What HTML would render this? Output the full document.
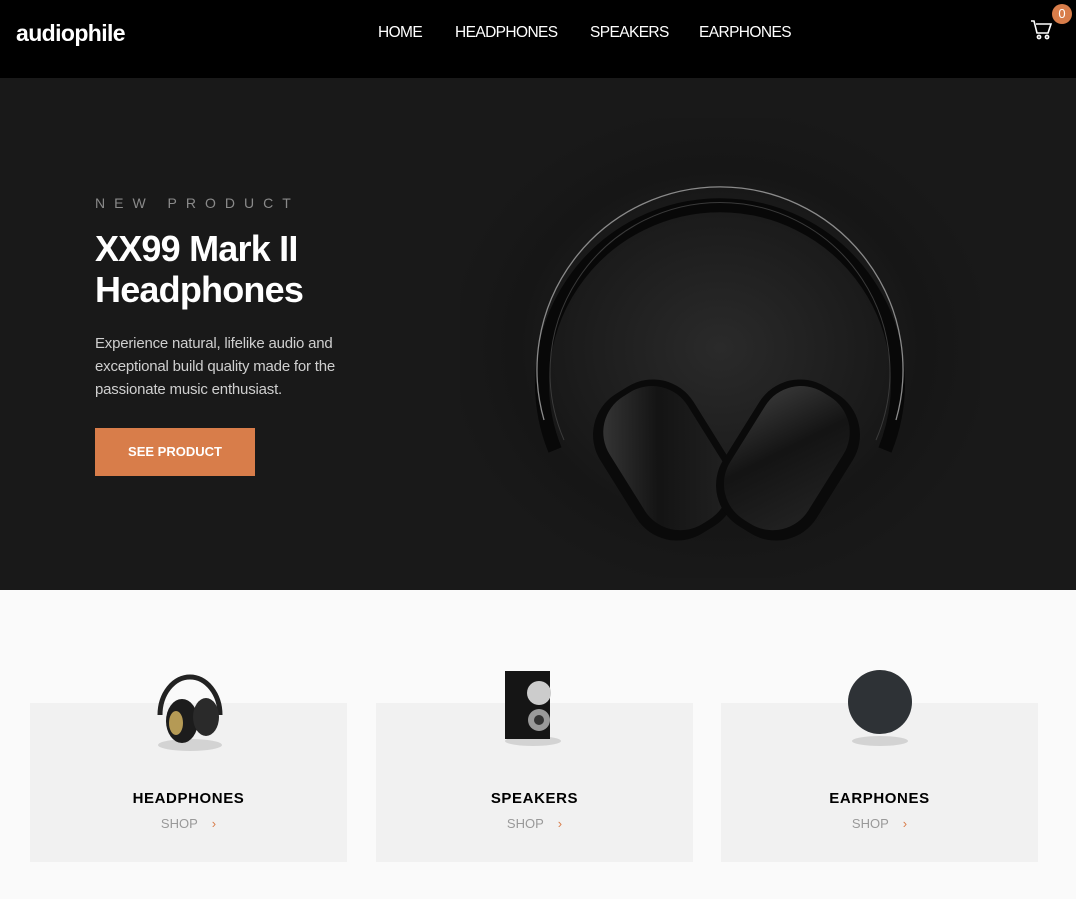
<!DOCTYPE html>
<html><head><meta charset="utf-8"><style>
*{margin:0;padding:0;box-sizing:border-box}
body{width:1076px;height:899px;overflow:hidden;background:#fafafa;font-family:"Liberation Sans",sans-serif}
.hdr{position:absolute;top:0;left:0;width:1076px;height:78px;background:#000}
.logo{position:absolute;left:16px;top:20px;color:#fff;font-weight:bold;font-size:23px;letter-spacing:-0.6px}
.nav{position:absolute;top:24px;color:#fff;font-size:15.5px;letter-spacing:-0.6px}
.hero{position:absolute;top:78px;left:0;width:1076px;height:512px;background:#191919;overflow:hidden}
.np{position:absolute;left:95px;top:117px;color:#8a8a8a;font-size:14px;letter-spacing:9px}
h1{position:absolute;left:95px;top:150px;color:#fff;font-size:36px;line-height:41px;font-weight:bold;letter-spacing:-0.8px}
.desc{position:absolute;left:95px;top:254px;color:#cfcfcf;font-size:15px;line-height:23px;width:280px;letter-spacing:-0.2px}
.btn{position:absolute;left:95px;top:350px;width:160px;height:48px;background:#d87d4a;color:#fff;font-weight:bold;font-size:13px;text-align:center;line-height:48px}
.card{position:absolute;top:703px;width:317px;height:159px;background:#f1f1f1;text-align:center}
.card .t{position:absolute;top:87px;width:100%;font-weight:bold;font-size:15px;letter-spacing:0.6px;color:#000}
.card .s{position:absolute;top:113px;width:100%;font-size:13px;color:#999}
.card .s b{color:#d87d4a;font-weight:normal;margin-left:14px}
.img{position:absolute}
</style></head><body>
<div class="hdr">
<div class="logo">audiophile</div>
<div class="nav" style="left:378px">HOME</div>
<div class="nav" style="left:455px">HEADPHONES</div>
<div class="nav" style="left:590px">SPEAKERS</div>
<div class="nav" style="left:699px">EARPHONES</div>
<svg style="position:absolute;left:1030px;top:19px" width="24" height="22" viewBox="0 0 24 22" fill="none" stroke="#fff" stroke-width="1.6"><path d="M1 2h3l3 12h11l3-9H6"/><circle cx="9" cy="18" r="1.6"/><circle cx="17" cy="18" r="1.6"/></svg>
<div style="position:absolute;left:1052px;top:4px;width:20px;height:20px;border-radius:50%;background:#d87d4a;color:#fff;font-size:13px;text-align:center;line-height:20px">0</div>
</div>
<div class="hero">
<div style="position:absolute;left:460px;top:40px;width:520px;height:460px;background:radial-gradient(ellipse at 50% 50%,#2a2a2a 0%,#161616 55%,#191919 75%)"></div>
<svg style="position:absolute;left:460px;top:42px" width="520" height="460" viewBox="0 0 520 460">
<defs><linearGradient id="g" x1="0" y1="0" x2="1" y2="1"><stop offset="0" stop-color="#4a4a4a"/><stop offset=".45" stop-color="#161616"/><stop offset="1" stop-color="#2a2a2a"/></linearGradient></defs>
<path d="M95 330 A178 178 0 1 1 425 330" fill="none" stroke="#080808" stroke-width="14"/>
<path d="M84 300 A183 183 0 1 1 436 300" fill="none" stroke="#8a8a8a" stroke-width="1.3"/>
<path d="M104 320 A170 170 0 1 1 416 320" fill="none" stroke="#3a3a3a" stroke-width="1"/>
<g transform="translate(205 340) rotate(-32)"><rect x="-55" y="-82" width="110" height="164" rx="48" fill="#0a0a0a"/><rect x="-44" y="-76" width="92" height="150" rx="42" fill="url(#g)" opacity=".8"/></g>
<g transform="translate(328 340) rotate(32)"><rect x="-55" y="-82" width="110" height="164" rx="48" fill="#0a0a0a"/><rect x="-48" y="-76" width="92" height="150" rx="42" fill="url(#g)" opacity=".8"/></g>
</svg>
<div class="np">NEW PRODUCT</div>
<h1>XX99 Mark II<br>Headphones</h1>
<div class="desc">Experience natural, lifelike audio and exceptional build quality made for the passionate music enthusiast.</div>
<div class="btn">SEE PRODUCT</div>
</div>
<div class="card" style="left:30px"><div class="t">HEADPHONES</div><div class="s">SHOP<b>›</b></div></div>
<div class="card" style="left:376px"><div class="t">SPEAKERS</div><div class="s">SHOP<b>›</b></div></div>
<div class="card" style="left:721px"><div class="t">EARPHONES</div><div class="s">SHOP<b>›</b></div></div>
<svg class="img" style="left:140px;top:665px" width="100" height="100"><ellipse cx="50" cy="80" rx="32" ry="6" fill="#000" opacity=".12"/><path d="M20 50 A30 38 0 0 1 80 50" fill="none" stroke="#222" stroke-width="5"/><ellipse cx="42" cy="56" rx="16" ry="22" fill="#1c1c1c"/><ellipse cx="36" cy="58" rx="7" ry="12" fill="#b59a55"/><ellipse cx="66" cy="52" rx="13" ry="19" fill="#2a2a2a"/></svg>
<svg class="img" style="left:495px;top:665px" width="80" height="100"><ellipse cx="38" cy="76" rx="28" ry="5" fill="#000" opacity=".12"/><rect x="10" y="6" width="45" height="68" fill="#151515"/><circle cx="44" cy="28" r="12" fill="#ccc"/><circle cx="44" cy="55" r="11" fill="#999"/><circle cx="44" cy="55" r="5" fill="#333"/></svg>
<svg class="img" style="left:840px;top:665px" width="80" height="100"><ellipse cx="40" cy="76" rx="28" ry="5" fill="#000" opacity=".12"/><circle cx="40" cy="37" r="32" fill="#2e3236"/></svg>
</body></html>
